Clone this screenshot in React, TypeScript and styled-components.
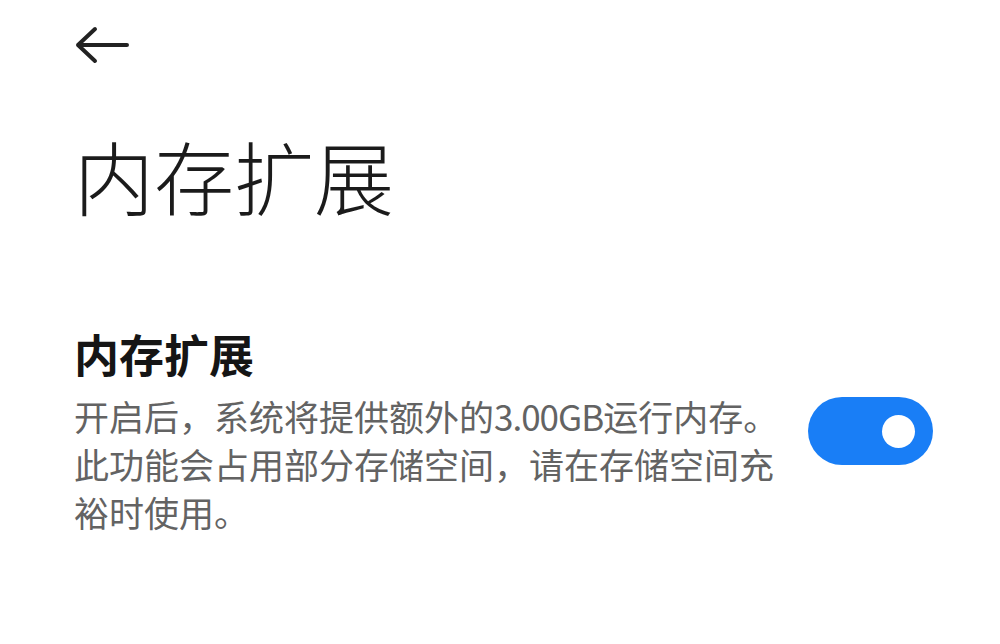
import React, { useState } from 'react';
import styled, { createGlobalStyle } from 'styled-components';

const GlobalStyle = createGlobalStyle`
    html, body {
        margin: 0;
        padding: 0;
        background: #fff;
    }
    body {
        font-family: "Noto Sans CJK SC", "Noto Sans", sans-serif;
    }
`;

const Page = styled.div`
    width: 1000px;
    height: 644px;
    overflow: hidden;
    box-sizing: border-box;
    padding: 22px 0 0 74px;
    display: flex;
    flex-direction: column;
`;

const BackButton = styled.button`
    width: 60px;
    height: 44px;
    padding: 0;
    border: none;
    background: none;
    display: flex;
    align-items: center;
    cursor: pointer;
`;

const PageTitle = styled.h1`
    margin: 58px 0 0 0;
    font-size: 80px;
    line-height: 100px;
    font-weight: 300;
    color: #1b1b1b;
`;

const SettingRow = styled.div`
    margin-top: 102px;
    display: flex;
    align-items: center;
    gap: 24px;
`;

const SettingText = styled.div`
    width: 710px;
    display: flex;
    flex-direction: column;
`;

const SettingTitle = styled.div`
    font-size: 45px;
    line-height: 56px;
    font-weight: 700;
    color: #151515;
`;

const SettingDesc = styled.div`
    margin-top: 10px;
    font-size: 35px;
    line-height: 48px;
    color: #636363;
    white-space: nowrap;
`;

const Latin = styled.span`
    letter-spacing: -1px;
`;

const Toggle = styled.button<{ on: boolean }>`
    width: 125px;
    height: 68px;
    border-radius: 34px;
    border: none;
    background: ${(p) => (p.on ? '#197ef6' : '#d9d9d9')};
    display: flex;
    align-items: center;
    justify-content: ${(p) => (p.on ? 'flex-end' : 'flex-start')};
    padding: 0 18px;
    box-sizing: border-box;
    cursor: pointer;
`;

const Knob = styled.span`
    width: 33px;
    height: 33px;
    border-radius: 50%;
    background: #fff;
`;

export default function App() {
    const [on, setOn] = useState(true);

    return (
        <>
            <GlobalStyle />
            <Page>
                <BackButton aria-label="返回">
                    <svg width="56" height="40" viewBox="0 0 56 40">
                        <path
                            d="M53 21 H4 M21 5 L4 21 L21 37"
                            fill="none"
                            stroke="#222"
                            strokeWidth="4"
                            strokeLinecap="round"
                            strokeLinejoin="round"
                        />
                    </svg>
                </BackButton>
                <PageTitle>内存扩展</PageTitle>
                <SettingRow>
                    <SettingText>
                        <SettingTitle>内存扩展</SettingTitle>
                        <SettingDesc>
                            开启后，系统将提供额外的<Latin>3.00GB</Latin>运行内存。
                            <br />
                            此功能会占用部分存储空间，请在存储空间充
                            <br />
                            裕时使用。
                        </SettingDesc>
                    </SettingText>
                    <Toggle on={on} onClick={() => setOn(!on)} aria-label="内存扩展开关">
                        <Knob />
                    </Toggle>
                </SettingRow>
            </Page>
        </>
    );
}
